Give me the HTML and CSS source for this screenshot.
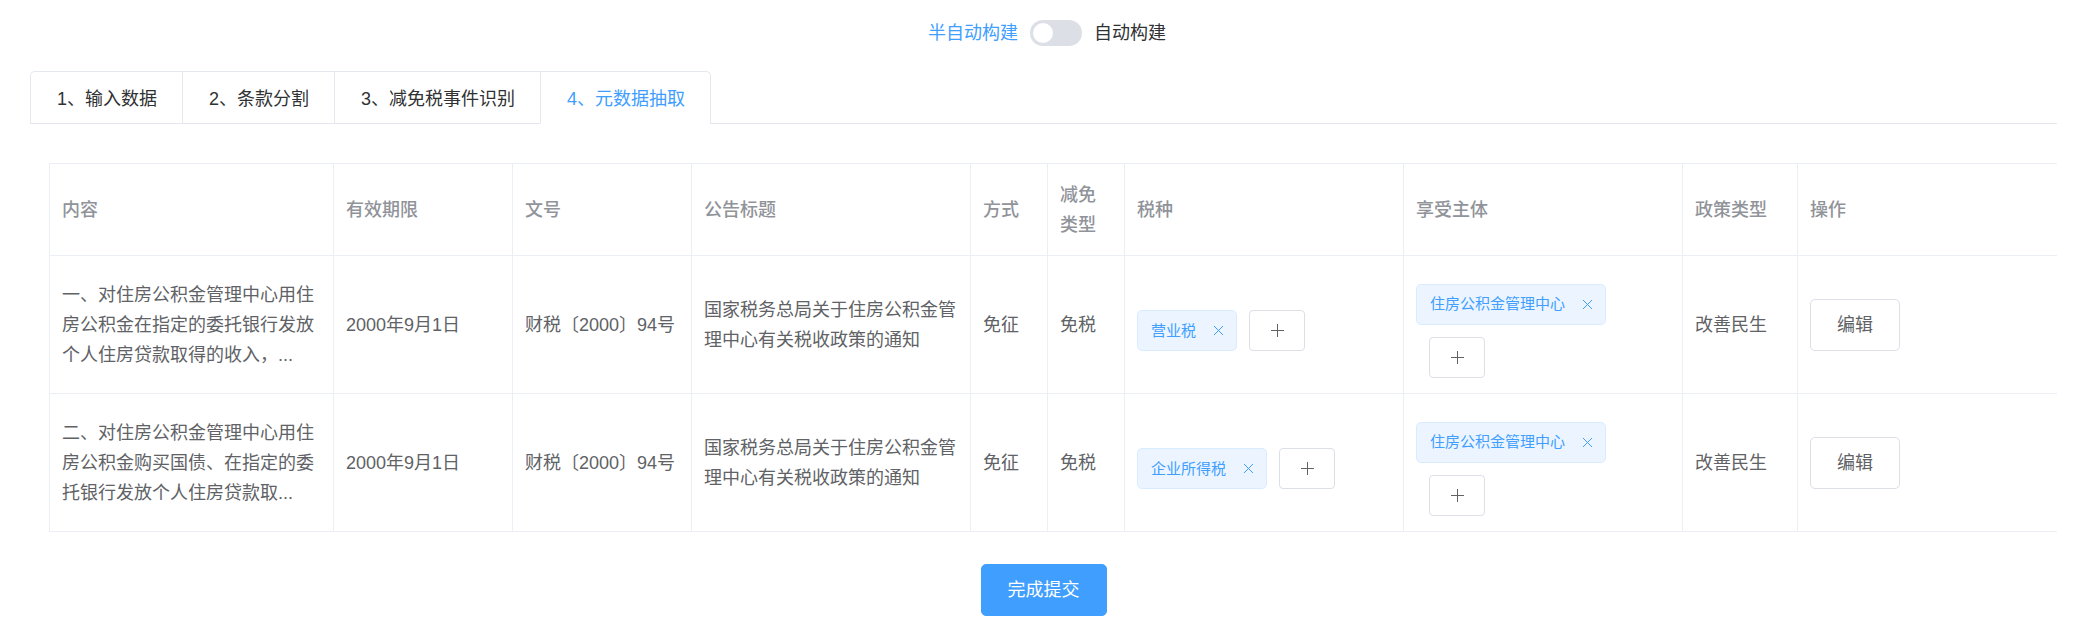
FILE: index.html
```html
<!DOCTYPE html>
<html lang="zh-CN">
<head>
<meta charset="utf-8">
<title>元数据抽取</title>
<link rel="stylesheet" href="styles.css">
</head>
<body>
<div class="mode">
  <label class="mode-label is-active" for="mode-switch">半自动构建</label>
  <input class="switch" type="checkbox" role="switch" id="mode-switch">
  <label class="mode-label" for="mode-switch">自动构建</label>
</div>

<main class="content">
  <div class="tabs">
    <div class="tabs-nav" role="tablist">
      <button class="tab" type="button" role="tab" aria-selected="false">1、输入数据</button>
      <button class="tab" type="button" role="tab" aria-selected="false">2、条款分割</button>
      <button class="tab" type="button" role="tab" aria-selected="false">3、减免税事件识别</button>
      <button class="tab is-active" type="button" role="tab" aria-selected="true">4、元数据抽取</button>
    </div>
  </div>

  <section class="panel" role="tabpanel">
    <table class="table">
      <colgroup>
        <col class="col-content"><col class="col-medium"><col class="col-medium"><col class="col-wide"><col class="col-narrow"><col class="col-narrow"><col class="col-wide"><col class="col-wide"><col class="col-policy"><col>
      </colgroup>
      <thead>
        <tr>
          <th scope="col">内容</th>
          <th scope="col">有效期限</th>
          <th scope="col">文号</th>
          <th scope="col">公告标题</th>
          <th scope="col">方式</th>
          <th scope="col">减免类型</th>
          <th scope="col">税种</th>
          <th scope="col">享受主体</th>
          <th scope="col">政策类型</th>
          <th scope="col">操作</th>
        </tr>
      </thead>
      <tbody>
        <tr>
          <td>一、对住房公积金管理中心用住房公积金在指定的委托银行发放个人住房贷款取得的收入，...</td>
          <td>2000年9月1日</td>
          <td>财税〔2000〕94号</td>
          <td>国家税务总局关于住房公积金管理中心有关税收政策的通知</td>
          <td>免征</td>
          <td>免税</td>
          <td>
            <div class="tags">
              <span class="tag">营业税<button class="tag-close" type="button" aria-label="移除"><svg viewBox="0 0 11 11" width="11" height="11"><path d="M1 1l9 9M10 1l-9 9"/></svg></button></span>
              <button class="add" type="button" aria-label="添加"><svg viewBox="0 0 13 13" width="13" height="13"><path d="M6.500 0v13M0 6.500h13"/></svg></button>
            </div>
          </td>
          <td>
            <div class="tags is-stacked">
              <span class="tag">住房公积金管理中心<button class="tag-close" type="button" aria-label="移除"><svg viewBox="0 0 11 11" width="11" height="11"><path d="M1 1l9 9M10 1l-9 9"/></svg></button></span>
              <button class="add" type="button" aria-label="添加"><svg viewBox="0 0 13 13" width="13" height="13"><path d="M6.500 0v13M0 6.500h13"/></svg></button>
            </div>
          </td>
          <td>改善民生</td>
          <td><button class="button" type="button">编辑</button></td>
        </tr>
        <tr>
          <td>二、对住房公积金管理中心用住房公积金购买国债、在指定的委托银行发放个人住房贷款取...</td>
          <td>2000年9月1日</td>
          <td>财税〔2000〕94号</td>
          <td>国家税务总局关于住房公积金管理中心有关税收政策的通知</td>
          <td>免征</td>
          <td>免税</td>
          <td>
            <div class="tags">
              <span class="tag">企业所得税<button class="tag-close" type="button" aria-label="移除"><svg viewBox="0 0 11 11" width="11" height="11"><path d="M1 1l9 9M10 1l-9 9"/></svg></button></span>
              <button class="add" type="button" aria-label="添加"><svg viewBox="0 0 13 13" width="13" height="13"><path d="M6.500 0v13M0 6.500h13"/></svg></button>
            </div>
          </td>
          <td>
            <div class="tags is-stacked">
              <span class="tag">住房公积金管理中心<button class="tag-close" type="button" aria-label="移除"><svg viewBox="0 0 11 11" width="11" height="11"><path d="M1 1l9 9M10 1l-9 9"/></svg></button></span>
              <button class="add" type="button" aria-label="添加"><svg viewBox="0 0 13 13" width="13" height="13"><path d="M6.500 0v13M0 6.500h13"/></svg></button>
            </div>
          </td>
          <td>改善民生</td>
          <td><button class="button" type="button">编辑</button></td>
        </tr>
      </tbody>
    </table>
  </section>

  <div class="actions">
    <button class="button is-primary" type="button">完成提交</button>
  </div>
</main>
</body>
</html>
```
FILE: styles.css
```css
* {
  box-sizing: border-box;
}

body {
  margin: 0;
  background: #fff;
  color: #606266;
  font-family: "Liberation Sans", "Noto Sans CJK SC", sans-serif;
  font-size: 18px;
  line-height: 30px;
}

button {
  margin: 0;
  font: inherit;
  cursor: pointer;
}

/* Build mode switch */
.mode {
  display: flex;
  align-items: center;
  justify-content: center;
  gap: 12px;
  padding-top: 18px;
}

.mode-label {
  color: #303133;
}

.mode-label.is-active {
  color: #409eff;
}

.switch {
  appearance: none;
  display: flex;
  align-items: center;
  width: 52px;
  height: 26px;
  margin: 0;
  padding: 0 3px;
  border-radius: 13px;
  background: #dcdfe6;
  cursor: pointer;
}

.switch::before {
  content: "";
  width: 20px;
  height: 20px;
  border-radius: 50%;
  background: #fff;
}

.switch:checked {
  justify-content: flex-end;
  background: #409eff;
}

.content {
  padding: 23px 37px 24px 30px;
}

/* Step tabs */
.tabs {
  display: flex;
  border-bottom: 1px solid #e4e7ed;
}

.tabs-nav {
  display: flex;
  margin-bottom: -1px;
  border: 1px solid #e4e7ed;
  border-bottom: 0;
  border-radius: 5px 5px 0 0;
}

.tab {
  height: 52px;
  padding: 2px 25px 0 26px;
  border: 0;
  border-bottom: 1px solid #e4e7ed;
  background: transparent;
  color: #303133;
}

.tab + .tab {
  border-left: 1px solid #e4e7ed;
}

.tab.is-active {
  border-bottom-color: #fff;
  color: #409eff;
}

/* Metadata table */
.panel {
  padding: 39px 0 0 19px;
}

.table {
  width: 100%;
  table-layout: fixed;
  border-collapse: separate;
  border-spacing: 0;
  border-top: 1px solid #ebeef5;
  border-left: 1px solid #ebeef5;
}

.col-content {
  width: 284px;
}

.col-medium {
  width: 179px;
}

.col-wide {
  width: 279px;
}

.col-narrow {
  width: 77px;
}

.col-policy {
  width: 115px;
}

.table th,
.table td {
  padding: 15px 12px;
  border-right: 1px solid #ebeef5;
  border-bottom: 1px solid #ebeef5;
  text-align: left;
  vertical-align: middle;
}

.table th {
  height: 92px;
  color: #909399;
  font-weight: 500;
}

.table td {
  height: 138px;
}

.table th:last-child,
.table td:last-child {
  border-right: 0;
}

/* Tags */
.tags {
  display: flex;
  gap: 12px;
  padding-top: 12px;
}

.tags.is-stacked {
  flex-direction: column;
  align-items: flex-start;
}

.is-stacked .add {
  margin-left: 13px;
}

.tag {
  display: inline-flex;
  align-items: center;
  height: 41px;
  padding: 0 12px 0 13px;
  border: 1px solid #d9ecff;
  border-radius: 5px;
  background: #ecf5ff;
  color: #409eff;
  font-size: 15px;
  white-space: nowrap;
}

.tag-close {
  display: flex;
  margin-left: 17px;
  padding: 0;
  border: 0;
  background: none;
  color: #409eff;
}

.add {
  display: flex;
  align-items: center;
  justify-content: center;
  width: 56px;
  height: 41px;
  padding: 0;
  border: 1px solid #dcdfe6;
  border-radius: 4px;
  background: #fff;
  color: #606266;
}

.tag-close svg,
.add svg {
  fill: none;
  stroke: currentColor;
  stroke-width: 1;
}

/* Buttons */
.button {
  height: 52px;
  padding: 0 26px;
  border: 1px solid #dcdfe6;
  border-radius: 5px;
  background: #fff;
  color: #606266;
}

.button.is-primary {
  border-color: #409eff;
  background: #409eff;
  color: #fff;
}

.actions {
  display: flex;
  justify-content: center;
  padding-top: 32px;
}
```
